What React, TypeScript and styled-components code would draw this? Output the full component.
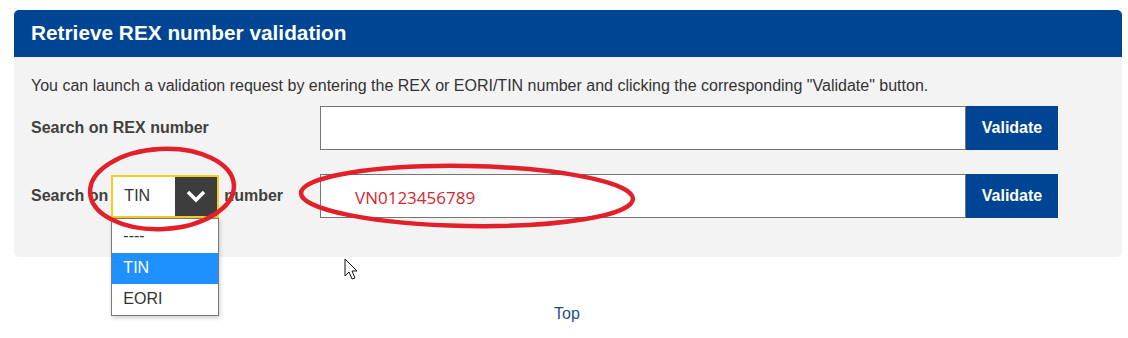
import React from "react";
import styled, { createGlobalStyle } from "styled-components";

const Global = createGlobalStyle`
  html, body { margin: 0; padding: 0; background: #ffffff; }
  body { font-family: "Liberation Sans", Arial, sans-serif; color: #333; }
`;

const Page = styled.div`
  position: relative;
  width: 1128px;
  height: 338px;
  padding: 10px 6px 0 14px;
  box-sizing: border-box;
  overflow: hidden;
`;

const Panel = styled.section`
  width: 1108px;
  border-radius: 5px;
  background: #f3f3f3;
`;

const Header = styled.h2`
  margin: 0;
  height: 47px;
  display: flex;
  align-items: center;
  padding: 0 17px 1px;
  box-sizing: border-box;
  background: #004494;
  color: #ffffff;
  font-size: 20.8px;
  font-weight: bold;
  border-radius: 5px 5px 0 0;
`;

const Body = styled.div`
  padding: 19px 17px 39px 17px;
  border-radius: 0 0 5px 5px;
`;

const Intro = styled.p`
  margin: 0 0 10px 0;
  font-size: 16px;
  line-height: 20px;
  color: #333;
`;

const Row = styled.div<{ $gap?: number }>`
  display: flex;
  align-items: center;
  height: 44px;
  margin-top: ${(p) => p.$gap ?? 0}px;
`;

const Label = styled.div`
  width: 289px;
  display: flex;
  align-items: center;
  font-size: 16px;
  font-weight: bold;
  color: #404040;
`;

const Field = styled.div`
  width: 646px;
  height: 44px;
  box-sizing: border-box;
  background: #ffffff;
  border: 1px solid #757575;
  display: flex;
  align-items: center;
  padding-left: 34px;
`;

const TypedValue = styled.span`
  font-family: "Open Sans", "Noto Sans", sans-serif;
  font-size: 17px;
  color: #d7262f;
  margin-top: 2px;
`;

const Button = styled.button`
  width: 92px;
  height: 44px;
  border: none;
  background: #004494;
  color: #ffffff;
  font-family: "Liberation Sans", Arial, sans-serif;
  font-size: 16px;
  font-weight: bold;
  padding: 0;
`;

const SelectWrap = styled.div`
  position: relative;
  margin: 0 5px 0 3px;
`;

const Select = styled.div`
  width: 108px;
  height: 43px;
  box-sizing: border-box;
  border: 2px solid #f3cd22;
  background: #ffffff;
  display: flex;
  align-items: stretch;
`;

const SelectValue = styled.span`
  flex: 1;
  display: flex;
  align-items: center;
  padding-left: 11px;
  font-weight: normal;
  font-size: 16px;
  color: #333;
`;

const Arrow = styled.span`
  width: 42px;
  background: #3d3d3d;
  display: flex;
  align-items: center;
  justify-content: center;
`;

const Menu = styled.ul`
  position: absolute;
  left: 0;
  top: 43px;
  width: 108px;
  margin: 0;
  padding: 0;
  list-style: none;
  box-sizing: border-box;
  background: #ffffff;
  border: 1px solid #7a7a7a;
  box-shadow: 1px 2px 4px rgba(0, 0, 0, 0.2);
  z-index: 2;
`;

const MenuItem = styled.li<{ $active?: boolean; $h: number }>`
  height: ${(p) => p.$h}px;
  display: flex;
  align-items: center;
  padding-left: 11px;
  font-size: 16px;
  font-weight: normal;
  color: ${(p) => (p.$active ? "#ffffff" : "#333")};
  background: ${(p) => (p.$active ? "#1e90ff" : "transparent")};
`;

const Footer = styled.div`
  display: flex;
  justify-content: center;
  padding-top: 48px;
  padding-right: 2px;
`;

const TopLink = styled.a`
  font-size: 16px;
  color: #1f4f8f;
  text-decoration: none;
`;

const Overlay = styled.svg`
  position: absolute;
  left: 0;
  top: 0;
  width: 1128px;
  height: 338px;
  pointer-events: none;
  z-index: 5;
`;

export default function App() {
  return (
    <>
      <Global />
      <Page>
        <Panel>
          <Header>Retrieve REX number validation</Header>
          <Body>
            <Intro>
              You can launch a validation request by entering the REX or EORI/TIN number and clicking the
              corresponding "Validate" button.
            </Intro>
            <Row>
              <Label>Search on REX number</Label>
              <Field />
              <Button>Validate</Button>
            </Row>
            <Row $gap={24}>
              <Label>
                <span>Search on</span>
                <SelectWrap>
                  <Select>
                    <SelectValue>TIN</SelectValue>
                    <Arrow>
                      <svg width="22" height="14" viewBox="0 0 22 14">
                        <path d="M3 3 L11 11 L19 3" fill="none" stroke="#ffffff" strokeWidth="3.5" />
                      </svg>
                    </Arrow>
                  </Select>
                  <Menu>
                    <MenuItem $h={34}>----</MenuItem>
                    <MenuItem $h={31} $active>
                      TIN
                    </MenuItem>
                    <MenuItem $h={31}>EORI</MenuItem>
                  </Menu>
                </SelectWrap>
                <span>number</span>
              </Label>
              <Field>
                <TypedValue>VN0123456789</TypedValue>
              </Field>
              <Button>Validate</Button>
            </Row>
          </Body>
        </Panel>
        <Footer>
          <TopLink href="#">Top</TopLink>
        </Footer>
        <Overlay viewBox="0 0 1128 338">
          <ellipse cx="162" cy="189" rx="72" ry="40" fill="none" stroke="#e2202a" strokeWidth="4.5" transform="rotate(-3 162 189)" />
          <ellipse cx="467" cy="196" rx="166" ry="30" fill="none" stroke="#e2202a" strokeWidth="4.5" transform="rotate(1 467 196)" />
          <path
            d="M345 259 L345 276 L349 272 L352 279 L355 278 L352 271 L357 271 Z"
            fill="#ffffff"
            stroke="#111"
            strokeWidth="1"
            strokeLinejoin="round"
          />
        </Overlay>
      </Page>
    </>
  );
}
